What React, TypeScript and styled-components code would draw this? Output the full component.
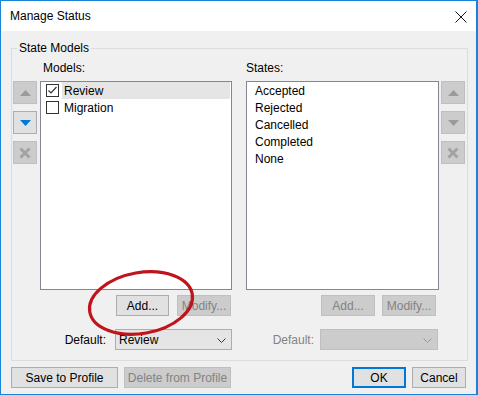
import React from 'react';
import styled, { createGlobalStyle } from 'styled-components';

const GlobalStyle = createGlobalStyle`
    html, body {
        margin: 0;
        padding: 0;
        background: #fff;
    }
    body {
        font-family: "Segoe UI", "Liberation Sans", Arial, sans-serif;
        font-size: 12px;
        color: #000;
    }
`;

const Window = styled.div`
    position: relative;
    width: 478px;
    height: 395px;
    box-sizing: border-box;
    border: 1px solid #1883d7;
    border-right-width: 2px;
    background: #f0f0f0;
    display: flex;
    flex-direction: column;
`;

const TitleBar = styled.div`
    height: 30px;
    flex: none;
    background: #fff;
    display: flex;
    align-items: center;
    justify-content: space-between;
    padding: 1px 9px 0 9px;
    box-sizing: border-box;
    line-height: 15px;
`;

const Body = styled.div`
    flex: 1;
    padding: 0 8px 0 10px;
    display: flex;
    flex-direction: column;
`;

const GroupBox = styled.fieldset`
    margin: 9px 0 0;
    padding: 0;
    min-width: 0;
    border: 1px solid #dcdcdc;
`;

const Legend = styled.legend`
    margin-left: 5px;
    padding: 0 2px;
    line-height: 16px;
`;

const GroupRow = styled.div`
    display: flex;
    align-items: flex-start;
    padding-bottom: 10px;
`;

const SideButtons = styled.div<{ $left: number }>`
    margin-left: ${(p) => p.$left}px;
    margin-top: 25px;
    width: 24px;
    display: flex;
    flex-direction: column;
    gap: 7px;
`;

const IconButton = styled.div<{ $enabled?: boolean }>`
    width: 24px;
    height: 23px;
    box-sizing: border-box;
    border: 1px solid ${(p) => (p.$enabled ? '#adadad' : '#bfbfbf')};
    background: ${(p) => (p.$enabled ? '#e1e1e1' : '#cccccc')};
    display: flex;
    align-items: center;
    justify-content: center;
`;

const Column = styled.div<{ $left: number; $width: number }>`
    margin-left: ${(p) => p.$left}px;
    width: ${(p) => p.$width}px;
    display: flex;
    flex-direction: column;
`;

const ColLabel = styled.div<{ $indent: number }>`
    height: 25px;
    box-sizing: border-box;
    padding: 5px 0 0 ${(p) => p.$indent}px;
    line-height: 15px;
`;

const ListBox = styled.div<{ $pad: number }>`
    height: 209px;
    box-sizing: border-box;
    border: 1px solid #828790;
    background: #fff;
    padding: 0 1px 0 ${(p) => p.$pad}px;
`;

const ListRow = styled.div`
    height: 17px;
    display: flex;
    align-items: center;
`;

const CheckBox = styled.div`
    width: 13px;
    height: 13px;
    box-sizing: border-box;
    border: 1px solid #333;
    background: #fff;
    margin-right: 3px;
    flex: none;
    display: flex;
    align-items: center;
    justify-content: center;
`;

const ItemText = styled.div<{ $selected?: boolean }>`
    flex: 1;
    height: 17px;
    box-sizing: border-box;
    padding: 1px 0 0 2px;
    line-height: 16px;
    background: ${(p) => (p.$selected ? '#e5e5e5' : 'transparent')};
`;

const ButtonRow = styled.div<{ $right: number; $gap: number }>`
    margin-top: 5px;
    display: flex;
    justify-content: flex-end;
    gap: ${(p) => p.$gap}px;
    padding-right: ${(p) => p.$right}px;
`;

const Button = styled.div<{ $width: number; $disabled?: boolean; $default?: boolean }>`
    width: ${(p) => p.$width}px;
    height: 21px;
    box-sizing: border-box;
    border: ${(p) =>
        p.$default ? '2px solid #0078d7' : p.$disabled ? '1px solid #bfbfbf' : '1px solid #adadad'};
    background: ${(p) => (p.$disabled ? '#cccccc' : '#e1e1e1')};
    color: ${(p) => (p.$disabled ? '#838383' : '#000')};
    display: flex;
    align-items: center;
    justify-content: center;
    padding-top: 1px;
    line-height: 15px;
`;

const DefaultRow = styled.div<{ $right: number; $gap: number }>`
    margin-top: 13px;
    height: 21px;
    display: flex;
    align-items: center;
    justify-content: flex-end;
    gap: ${(p) => p.$gap}px;
    padding-right: ${(p) => p.$right}px;
`;

const DefaultLabel = styled.div<{ $disabled?: boolean }>`
    color: ${(p) => (p.$disabled ? '#838383' : '#000')};
    line-height: 15px;
    padding-top: 1px;
`;

const Combo = styled.div<{ $width: number; $disabled?: boolean }>`
    width: ${(p) => p.$width}px;
    height: 21px;
    box-sizing: border-box;
    border: 1px solid ${(p) => (p.$disabled ? '#bfbfbf' : '#adadad')};
    background: ${(p) => (p.$disabled ? '#cccccc' : '#e5e5e5')};
    display: flex;
    align-items: center;
    justify-content: space-between;
    padding: 1px 5px 0 3px;
    line-height: 15px;
`;

const BottomRow = styled.div`
    margin-top: 6px;
    margin-right: 2px;
    display: flex;
    justify-content: space-between;
`;

const ButtonGroup = styled.div`
    display: flex;
    gap: 6px;
`;

const Overlay = styled.svg`
    position: absolute;
    left: -1px;
    top: -1px;
    pointer-events: none;
`;

const Up = ({ color }: { color: string }) => (
    <svg width="11" height="6" viewBox="0 0 11 6">
        <polygon points="0,6 5.5,0 11,6" fill={color} />
    </svg>
);

const Down = ({ color }: { color: string }) => (
    <svg width="11" height="6" viewBox="0 0 11 6">
        <polygon points="0,0 5.5,6 11,0" fill={color} />
    </svg>
);

const Cross = ({ color }: { color: string }) => (
    <svg width="12" height="12" viewBox="0 0 12 12">
        <path d="M1.5 1.5 L10.5 10.5 M10.5 1.5 L1.5 10.5" stroke={color} strokeWidth="3" />
    </svg>
);

const Chevron = ({ color }: { color: string }) => (
    <svg width="9" height="5" viewBox="0 0 9 5">
        <path d="M0.5 0.5 L4.5 4.5 L8.5 0.5" stroke={color} strokeWidth="1" fill="none" />
    </svg>
);

const models = [
    { name: 'Review', checked: true },
    { name: 'Migration', checked: false },
];

const states = ['Accepted', 'Rejected', 'Cancelled', 'Completed', 'None'];

const App: React.FC = () => {
    return (
        <>
            <GlobalStyle />
            <Window>
                <TitleBar>
                    <span>Manage Status</span>
                    <svg width="12" height="12" viewBox="0 0 12 12">
                        <path d="M0.5 0.5 L11.5 11.5 M11.5 0.5 L0.5 11.5" stroke="#111" strokeWidth="1" />
                    </svg>
                </TitleBar>
                <Body>
                    <GroupBox>
                        <Legend>State Models</Legend>
                        <GroupRow>
                            <SideButtons $left={1}>
                                <IconButton>
                                    <Up color="#9b9b9b" />
                                </IconButton>
                                <IconButton $enabled>
                                    <Down color="#0078d7" />
                                </IconButton>
                                <IconButton>
                                    <Cross color="#a3a3a3" />
                                </IconButton>
                            </SideButtons>

                            <Column $left={3} $width={192}>
                                <ColLabel $indent={3}>Models:</ColLabel>
                                <ListBox $pad={5}>
                                    {models.map((m, i) => (
                                        <ListRow key={m.name}>
                                            <CheckBox>
                                                {m.checked && (
                                                    <svg width="11" height="11" viewBox="0 0 11 11">
                                                        <path d="M1.5 5.5 L4 8 L9.5 2" stroke="#333" strokeWidth="1.2" fill="none" />
                                                    </svg>
                                                )}
                                            </CheckBox>
                                            <ItemText $selected={i === 0}>{m.name}</ItemText>
                                        </ListRow>
                                    ))}
                                </ListBox>
                                <ButtonRow $right={1} $gap={8}>
                                    <Button $width={53}>Add...</Button>
                                    <Button $width={54} $disabled>
                                        Modify...
                                    </Button>
                                </ButtonRow>
                                <DefaultRow $right={0} $gap={9}>
                                    <DefaultLabel>Default:</DefaultLabel>
                                    <Combo $width={117}>
                                        <span>Review</span>
                                        <Chevron color="#333" />
                                    </Combo>
                                </DefaultRow>
                            </Column>

                            <Column $left={14} $width={193}>
                                <ColLabel $indent={0}>States:</ColLabel>
                                <ListBox $pad={6}>
                                    {states.map((s) => (
                                        <ListRow key={s}>
                                            <ItemText>{s}</ItemText>
                                        </ListRow>
                                    ))}
                                </ListBox>
                                <ButtonRow $right={3} $gap={7}>
                                    <Button $width={54} $disabled>
                                        Add...
                                    </Button>
                                    <Button $width={54} $disabled>
                                        Modify...
                                    </Button>
                                </ButtonRow>
                                <DefaultRow $right={1} $gap={6}>
                                    <DefaultLabel $disabled>Default:</DefaultLabel>
                                    <Combo $width={118} $disabled>
                                        <span />
                                        <Chevron color="#9a9a9a" />
                                    </Combo>
                                </DefaultRow>
                            </Column>

                            <SideButtons $left={2}>
                                <IconButton>
                                    <Up color="#9b9b9b" />
                                </IconButton>
                                <IconButton>
                                    <Down color="#9b9b9b" />
                                </IconButton>
                                <IconButton>
                                    <Cross color="#a3a3a3" />
                                </IconButton>
                            </SideButtons>
                        </GroupRow>
                    </GroupBox>

                    <BottomRow>
                        <ButtonGroup>
                            <Button $width={107}>Save to Profile</Button>
                            <Button $width={107} $disabled>
                                Delete from Profile
                            </Button>
                        </ButtonGroup>
                        <ButtonGroup>
                            <Button $width={54} $default>
                                OK
                            </Button>
                            <Button $width={54}>Cancel</Button>
                        </ButtonGroup>
                    </BottomRow>
                </Body>

                {/* red annotation circle around the Add button */}
                <Overlay width="478" height="395" viewBox="0 0 478 395">
                    <ellipse
                        cx="141"
                        cy="303"
                        rx="52"
                        ry="30.5"
                        transform="rotate(-10 141 303)"
                        fill="none"
                        stroke="#c0141c"
                        strokeWidth="3.2"
                    />
                </Overlay>
            </Window>
        </>
    );
};

export default App;
